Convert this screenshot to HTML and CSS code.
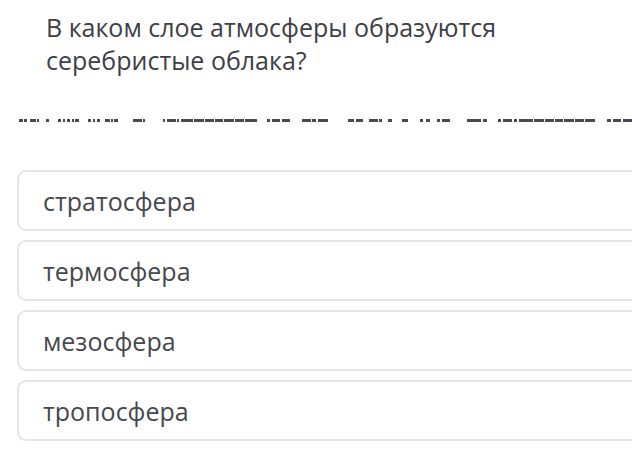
FILE: index.html
```html
<!DOCTYPE html>
<html lang="ru">
<head>
<meta charset="utf-8">
<link rel="stylesheet" href="styles.css">
</head>
<body>
<div class="page">
  <div class="question">В каком слое атмосферы образуются<br>серебристые облака?</div>
  <svg class="dashes" width="632" height="3" viewBox="0 0 632 3" aria-hidden="true">
    <g fill="#474b50">
      <rect x="19" y="0" width="4" height="3"/><rect x="24" y="0" width="3" height="3"/>
      <rect x="30" y="0" width="6" height="3"/><rect x="37" y="0" width="2" height="3"/>
      <rect x="46" y="0" width="3" height="3"/>
      <rect x="58" y="0" width="3" height="3"/><rect x="63" y="0" width="2" height="3"/><rect x="67" y="0" width="3" height="3"/>
      <rect x="72" y="0" width="2" height="3"/><rect x="75" y="0" width="4" height="3"/>
      <rect x="88" y="0" width="3" height="3"/><rect x="93" y="0" width="2" height="3"/><rect x="97" y="0" width="3" height="3"/>
      <rect x="105" y="0" width="5" height="3"/><rect x="111" y="0" width="2" height="3"/><rect x="114" y="0" width="4" height="3"/>
      <rect x="133" y="0" width="9" height="3"/><rect x="143" y="0" width="2" height="3"/>
      <rect x="163" y="0" width="2" height="3"/><rect x="167" y="0" width="9" height="3"/><rect x="177" y="0" width="2" height="3"/>
      <rect x="181" y="0" width="12" height="3"/><rect x="194" y="0" width="10" height="3"/><rect x="205" y="0" width="9" height="3"/>
      <rect x="215" y="0" width="8" height="3"/><rect x="224" y="0" width="10" height="3"/><rect x="235" y="0" width="9" height="3"/>
      <rect x="245" y="0" width="12" height="3"/>
      <rect x="267" y="0" width="3" height="3"/><rect x="272" y="0" width="8" height="3"/><rect x="282" y="0" width="8" height="3"/>
      <rect x="302" y="0" width="9" height="3"/><rect x="312" y="0" width="4" height="3"/><rect x="318" y="0" width="10" height="3"/>
      <rect x="348" y="0" width="6" height="3"/><rect x="356" y="0" width="7" height="3"/>
      <rect x="369" y="0" width="9" height="3"/><rect x="379" y="0" width="3" height="3"/>
      <rect x="388" y="0" width="4" height="3"/>
      <rect x="402" y="0" width="6" height="3"/>
      <rect x="420" y="0" width="3" height="3"/><rect x="426" y="0" width="4" height="3"/>
      <rect x="437" y="0" width="3" height="3"/><rect x="442" y="0" width="8" height="3"/>
      <rect x="467" y="0" width="14" height="3"/><rect x="483" y="0" width="4" height="3"/>
      <rect x="498" y="0" width="3" height="3"/><rect x="503" y="0" width="9" height="3"/><rect x="514" y="0" width="3" height="3"/>
      <rect x="519" y="0" width="14" height="3"/><rect x="534" y="0" width="10" height="3"/><rect x="545" y="0" width="9" height="3"/>
      <rect x="555" y="0" width="8" height="3"/><rect x="564" y="0" width="10" height="3"/><rect x="575" y="0" width="9" height="3"/>
      <rect x="585" y="0" width="10" height="3"/>
      <rect x="607" y="0" width="4" height="3"/><rect x="613" y="0" width="8" height="3"/><rect x="623" y="0" width="9" height="3"/>
    </g>
  </svg>
  <ul class="options">
    <li class="option">стратосфера</li>
    <li class="option">термосфера</li>
    <li class="option">мезосфера</li>
    <li class="option">тропосфера</li>
  </ul>
</div>
</body>
</html>
```

FILE: styles.css
```css
html, body {
  margin: 0;
  padding: 0;
  background: #ffffff;
}
body {
  width: 632px;
  height: 474px;
  overflow: hidden;
  font-family: "Open Sans", "Noto Sans", sans-serif;
  color: #3d4045;
}
.page {
  display: flex;
  flex-direction: column;
}
.question {
  padding: 11px 0 0 46px;
  font-size: 25px;
  line-height: 33px;
  color: #3d4045;
}
.dashes {
  display: block;
  margin-top: 42px;
}
.options {
  list-style: none;
  margin: 48px 0 0 17px;
  padding: 0;
  display: flex;
  flex-direction: column;
  gap: 9px;
}
.option {
  height: 57px;
  border: 2px solid #e6e6e6;
  border-right: none;
  border-radius: 9px 0 0 9px;
  padding: 0 0 0 24px;
  display: flex;
  align-items: center;
  font-size: 25px;
  color: #45484c;
}
```
